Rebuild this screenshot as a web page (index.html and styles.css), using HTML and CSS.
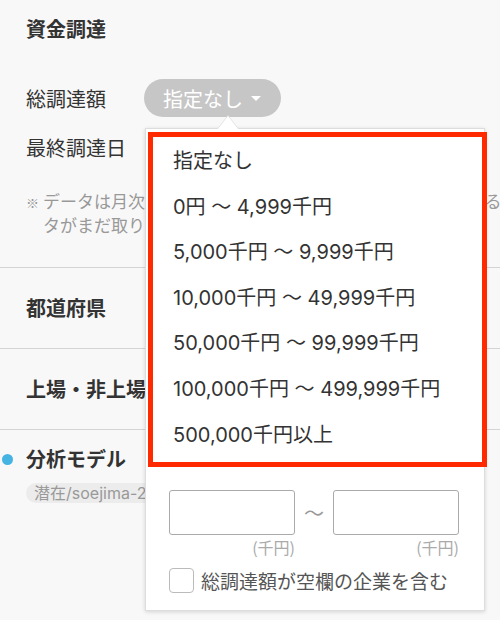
FILE: index.html
```html
<!DOCTYPE html>
<html lang="ja">

<head>
  <meta charset="UTF-8">
  <meta name="viewport" content="width=device-width, initial-scale=1.0">
  <title>資金調達</title>
  <link rel="stylesheet" href="styles.css">
</head>

<body>

  <!-- 資金調達 -->
  <section class="block block-funding">
    <h2 class="block-title">資金調達</h2>

    <div class="field-row">
      <span class="field-label">総調達額</span>
      <div class="select-wrap">
        <button class="pill-select">指定なし <span class="caret"></span></button>

        <!-- Dropdown -->
        <div class="dropdown">
          <ul class="option-list">
            <li>指定なし</li>
            <li>0円 〜 4,999千円</li>
            <li>5,000千円 〜 9,999千円</li>
            <li>10,000千円 〜 49,999千円</li>
            <li>50,000千円 〜 99,999千円</li>
            <li>100,000千円 〜 499,999千円</li>
            <li>500,000千円以上</li>
          </ul>

          <div class="range">
            <div class="range-field">
              <input type="text" class="range-input">
              <span class="unit">(千円)</span>
            </div>
            <span class="range-sep">〜</span>
            <div class="range-field">
              <input type="text" class="range-input">
              <span class="unit">(千円)</span>
            </div>
          </div>

          <label class="check">
            <span class="check-box"></span>
            総調達額が空欄の企業を含む
          </label>
        </div>
      </div>
    </div>

    <div class="field-row">
      <span class="field-label">最終調達日</span>
    </div>

    <p class="note"><span class="note-mark">※</span>データは月次で更新しているため、最新の資金調達に関するデー<br>タがまだ取り込まれていない場合があります。</p>
  </section>

  <!-- 都道府県 -->
  <section class="block">
    <h2 class="block-title">都道府県</h2>
  </section>

  <!-- 上場・非上場 -->
  <section class="block">
    <h2 class="block-title">上場・非上場</h2>
  </section>

  <!-- 分析モデル -->
  <section class="block block-model">
    <h2 class="block-title"><span class="dot"></span>分析モデル</h2>
    <span class="chip">潜在/soejima-2021-model</span>
  </section>

</body>

</html>
```

FILE: styles.css
```css
/* General Reset */
* {
  margin: 0;
  padding: 0;
  box-sizing: border-box;
}

body {
  font-family: "Noto Sans CJK JP", "Noto Sans", sans-serif;
  background-color: #f8f8f8;
  color: #333;
  width: 500px;
  height: 620px;
  overflow: hidden;
}

/* Blocks */
.block {
  display: flex;
  flex-direction: column;
  align-items: flex-start;
  padding: 27px 26px 0;
  height: 81px;
  border-bottom: 1px solid #d4d4d4;
}

.block-funding {
  height: 268px;
  padding-top: 16px;
  padding-right: 0;
}

.block-model {
  border-bottom: none;
  height: auto;
  padding-top: 16px;
  overflow: hidden;
}

.block-title {
  font-size: 20px;
  font-weight: bold;
  line-height: 26px;
  color: #333;
  position: relative;
}

.dot {
  position: absolute;
  left: -24px;
  top: 8px;
  width: 11px;
  height: 11px;
  border-radius: 50%;
  background-color: #45b4e2;
}

/* Field rows */
.field-row {
  display: flex;
  align-items: center;
  height: 38px;
  margin-top: 37px;
}

.field-row + .field-row {
  margin-top: 11px;
}

.field-label {
  font-size: 20px;
  color: #333;
  width: 118px;
}

.select-wrap {
  position: relative;
}

.pill-select {
  font-family: inherit;
  font-size: 20px;
  color: #fff;
  background-color: #c6c6c6;
  border: none;
  border-radius: 19px;
  height: 38px;
  padding: 0 20px 0 19px;
  display: flex;
  align-items: center;
}

.caret {
  display: inline-block;
  margin-left: 8px;
  border-left: 5px solid transparent;
  border-right: 5px solid transparent;
  border-top: 5px solid #fff;
}

/* the note runs on past the right edge of the panel */
.note {
  margin-top: 24px;
  width: 474px;
  overflow: hidden;
  font-size: 17px;
  line-height: 22px;
  color: #999;
  white-space: nowrap;
  padding-left: 17px;
}

.note-mark {
  display: inline-block;
  width: 17px;
  margin-left: -17px;
  font-size: 13px;
}

/* Dropdown */
.dropdown {
  position: absolute;
  top: 49px;
  left: 1px;
  width: 340px;
  background-color: #fff;
  border: 1px solid #ddd;
  box-shadow: 0 1px 4px rgba(0, 0, 0, 0.15);
  z-index: 10;
  padding: 3px 0 16px 0;
}

.dropdown::before,
.dropdown::after {
  content: "";
  position: absolute;
  left: 71px;
  border-left: 11px solid transparent;
  border-right: 11px solid transparent;
}

.dropdown::before {
  top: -14px;
  border-bottom: 14px solid #ddd;
}

.dropdown::after {
  top: -13px;
  border-bottom: 14px solid #fff;
}

.option-list {
  list-style: none;
  border: 5px solid #ff2a00;
  margin-left: 2px;
  margin-right: -3px;
  padding: 2px 0 4px 20px;
}

.option-list li {
  font-family: Inter, "Noto Sans CJK JP", sans-serif;
  font-size: 20px;
  line-height: 45.6px;
  color: #333;
}

/* Range inputs */
.range {
  display: flex;
  align-items: flex-start;
  padding: 23px 0 0 23px;
}

.range-field {
  display: flex;
  flex-direction: column;
  align-items: flex-end;
}

.range-input {
  width: 126px;
  height: 45px;
  border: 1px solid #aaa;
  border-radius: 3px;
  background-color: #fff;
}

.unit {
  font-size: 16px;
  color: #aaa;
  line-height: 20px;
  margin-top: 2px;
}

.range-sep {
  font-size: 20px;
  color: #999;
  width: 38px;
  text-align: center;
  line-height: 45px;
}

.check {
  display: flex;
  align-items: center;
  gap: 7px;
  margin: 10px 0 0 23px;
  font-size: 19px;
  color: #555;
}

.check-box {
  width: 25px;
  height: 25px;
  border: 1px solid #bbb;
  border-radius: 4px;
  background-color: #fff;
}

/* Chip */
.chip {
  margin-top: 11px;
  padding: 0 8px;
  font-family: Inter, "Noto Sans CJK JP", sans-serif;
  font-size: 16px;
  line-height: 20px;
  color: #999;
  background-color: #ececec;
  border-radius: 10px;
  white-space: nowrap;
}
```
